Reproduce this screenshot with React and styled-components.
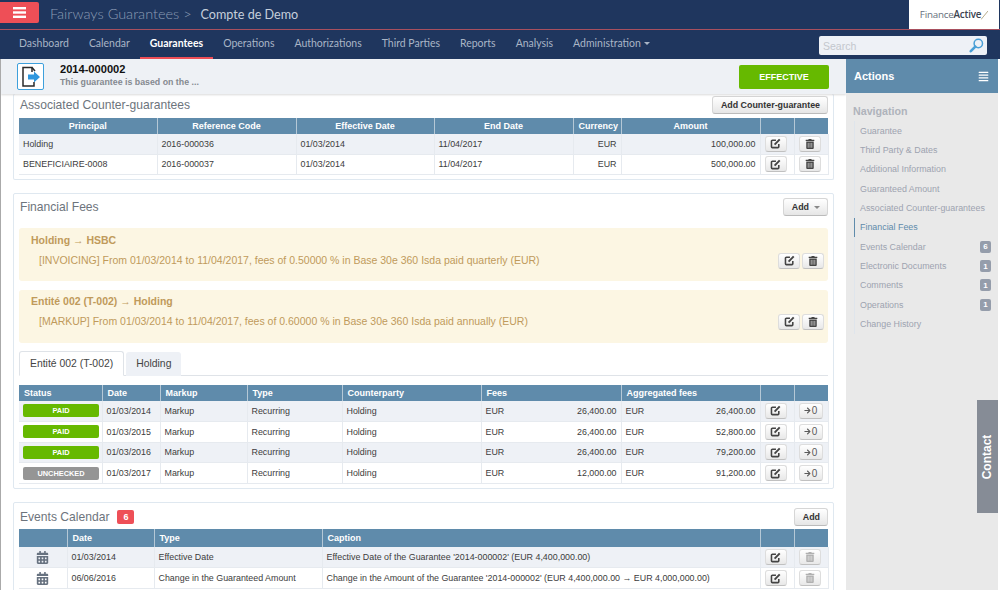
import React from 'react';
import styled, { createGlobalStyle } from 'styled-components';
import { FaTrashAlt, FaArrowRight, FaCalendarAlt, FaAlignJustify } from 'react-icons/fa';

const Global = createGlobalStyle`
  html, body { margin: 0; padding: 0; background: #fff; }
  body { font-family: "Liberation Sans", Arial, sans-serif; font-size: 9px; color: #333; }
  * { box-sizing: border-box; }
`;

const Page = styled.div`width: 1000px; height: 590px; overflow: hidden; position: relative; display: flex; flex-direction: column;`;
const TopBar = styled.div`height: 29px; flex: none; background: #1f365e; display: flex; align-items: flex-start;`;
const MenuButton = styled.div`width: 39px; height: 21px; margin-top: 2px; background: #ee4f57; border-radius: 0 2px 2px 0; display: flex; align-items: center; justify-content: center;`;
const Crumb = styled.div`margin: 4px 0 0 11px; font-family: Lato, sans-serif; font-size: 14.5px; line-height: 19px; color: #8c9db5; font-weight: 300; white-space: nowrap;`;
const Account = styled.span`color: #c6cfdb; font-weight: 400; font-size: 12.6px; margin-left: 5px;`;
const Logo = styled.div`margin-left: auto; margin-right: 1px; width: 90px; height: 29px; background: #fff; display: flex; align-items: center; justify-content: center; font-family: "Open Sans", sans-serif; font-size: 9.8px; letter-spacing: -0.2px; color: #666f7c;`;
const LogoBold = styled.b`color: #3a4350; font-weight: 600;`;
const NavBar = styled.div`height: 30px; flex: none; background: #1f365e; border-top: 1px solid #a8505f; display: flex; padding-left: 9px; align-items: stretch; position: relative;`;
const NavItem = styled.div`padding: 0 10px; font-family: Lato, sans-serif; font-size: 10.47px; line-height: 27px; white-space: nowrap; color: ${p => p.$active ? '#fff' : '#a9b5c6'}; font-weight: ${p => p.$active ? 700 : 400}; border-bottom: 2px solid ${p => p.$active ? '#ee4f57' : 'transparent'};`;
const Caret = styled.span`display: inline-block; margin-left: 3px; border: 3px solid transparent; border-top-color: #a9b5c6; border-bottom: 0; vertical-align: 2px;`;
const SearchBox = styled.div`margin: 6px 13px 0 auto; width: 168px; height: 19px; background: #eef1f6; border-radius: 2px; display: flex; align-items: center; justify-content: space-between; padding: 0 3px 0 4px; font-size: 10.5px; color: #c3c7cd;`;

const Main = styled.div`flex: 1; display: flex; min-height: 0; padding-right: 2px;`;
const Content = styled.div`width: 846px; flex: none; border-left: 1px solid #aaa; display: flex; flex-direction: column; overflow: hidden;`;
const Header = styled.div`height: 35px; flex: none; background: #eef1f5; display: flex; align-items: center; padding: 0 17px 0 16px; box-shadow: 0 1px 2px rgba(0,0,0,.15); position: relative; z-index: 1;`;
const DocIcon = styled.div`width: 27px; height: 27px; background: #fff; border: 1px solid #3da0dc; border-radius: 2px; display: flex; align-items: center; justify-content: center;`;
const HeaderText = styled.div`margin-left: 16px; padding-bottom: 2px; display: flex; flex-direction: column;`;
const DocNumber = styled.div`font-weight: 700; font-size: 11.1px; line-height: 13px; color: #111;`;
const DocSub = styled.div`font-weight: 700; font-size: 8.8px; line-height: 13px; color: #858a90;`;
const StatusButton = styled.div`margin-left: auto; width: 90px; height: 24px; background: #66b900; border-radius: 2px; color: #fff; font-weight: 700; font-size: 9px; display: flex; align-items: center; justify-content: center;`;

const Panels = styled.div`padding: 0 12px; display: flex; flex-direction: column; gap: 13px;`;
const Panel = styled.div`border: 1px solid #dfe8f0; border-top: ${p => p.$open ? 0 : '1px solid #dfe8f0'}; border-radius: 2px; padding: 0 5px ${p => p.$pb ?? 5}px;`;
const PanelHead = styled.div`height: ${p => p.$h}px; display: flex; align-items: center; justify-content: space-between; padding: ${p => p.$pt || 0}px 0 ${p => p.$pb || 0}px 1px;`;
const TitleGroup = styled.div`display: flex; align-items: center; gap: 8px;`;
const Title = styled.div`font-size: 12.1px; color: #6d747c;`;
const CountBadge = styled.span`background: #ee4f57; color: #fff; font-weight: 700; font-size: 9px; width: 17px; height: 14px; border-radius: 2px; display: flex; align-items: center; justify-content: center;`;
const Btn = styled.div`height: 18px; padding: 0 7px 0 7.5px; display: inline-flex; align-items: center; gap: 5px; font-size: 8.9px; font-weight: 700; color: #333; background: linear-gradient(#fff, #e6e6e6); border: 1px solid #d6d6d6; border-bottom-color: #bbb; border-radius: 3px; white-space: nowrap;`;
const BtnCaret = styled.span`border: 3px solid transparent; border-top-color: #888; border-bottom: 0;`;
const IconBtn = styled.div`width: ${p => p.$wide ? 24 : 22}px; height: 16px; display: inline-flex; align-items: center; justify-content: center; gap: 1px; font-size: 10px; vertical-align: middle; color: ${p => p.$muted ? '#b0b0b0' : p.$wide ? '#5a5a5a' : '#444'}; background: linear-gradient(#fff, #e8e8e8); border: 1px solid #ddd; border-bottom-color: #c0c0c0; border-radius: 3px;`;

const Table = styled.table`width: 100%; table-layout: fixed; border-collapse: collapse; font-size: 8.9px;`;
const Th = styled.th`background: #5f8bab; color: #fff; font-weight: 700; font-size: 9px; height: ${p => p.$h}px; padding: 0 5px; text-align: ${p => p.$left ? 'left' : 'center'}; border-right: 1px solid #b5c8d6; &:last-child { border-right: 0; }`;
const Tr = styled.tr`background: ${p => p.$odd ? '#eef1f6' : '#fff'};`;
const Td = styled.td`height: ${p => p.$h}px; padding: ${p => p.$pad ?? '0 4px'}; border: 1px solid #e6eaef; border-width: 0 1px 1px 0; color: #3c3c3c; white-space: nowrap; overflow: hidden; text-align: ${p => p.$align || 'left'};`;
const ActionTd = styled(Td)`padding: 0 ${p => p.$right ?? 3}px 0 0; text-align: center;`;
const Split = styled.div`display: flex; justify-content: space-between;`;
const Pill = styled.div`width: 76px; height: 13px; margin-left: 4px; border-radius: 2px; background: ${p => p.$grey ? '#959595' : '#66b900'}; color: #fff; font-weight: 700; font-size: 7.4px; display: flex; align-items: center; justify-content: center;`;
const CalIcon = styled(FaCalendarAlt)`color: #677280; font-size: 13px; display: block; margin: 0 auto;`;

const Alert = styled.div`height: 53px; background: #fcf6e3; border-radius: 3px; margin-top: ${p => p.$mt}px; padding: ${p => p.$pt}px 4px 0 12px; color: #c09a5b; font-size: 10.5px; display: flex; flex-direction: column;`;
const AlertTitle = styled.div`font-weight: 700; line-height: 12px;`;
const AlertRow = styled.div`display: flex; justify-content: space-between; padding-left: 8px; line-height: 12px; margin-top: 8px;`;
const AlertActions = styled.div`display: flex; gap: 2px; margin-top: -1px; align-self: flex-start;`;
const Tabs = styled.div`display: flex; gap: 2px; height: 25px; margin-top: 8px; border-bottom: 1px solid #dfe3e8; align-items: flex-end;`;
const Tab = styled.div`height: ${p => p.$active ? 25 : 24}px; padding: 0 10px; display: flex; align-items: center; font-size: 10.4px; color: #444; border-radius: 3px 3px 0 0; background: ${p => p.$active ? '#fff' : '#eef1f6'}; border: ${p => p.$active ? '1px solid #dfe3e8' : '0'}; border-bottom: ${p => p.$active ? '1px solid #fff' : '0'}; margin-bottom: -1px;`;
const TabBody = styled.div`padding-top: 9px;`;

const Side = styled.div`width: 152px; flex: none; background: #e9e9e9; display: flex; flex-direction: column;`;
const SideHead = styled.div`height: 34px; background: #5f8bab; color: #fff; display: flex; align-items: center; justify-content: space-between; padding: 0 9px 0 8px; font-weight: 700; font-size: 11px;`;
const SideTitle = styled.div`margin: 12px 0 3px 7px; font-weight: 700; font-size: 10.7px; color: #afb3bb; line-height: 13px;`;
const SideList = styled.div`margin-left: 8px; display: flex; flex-direction: column;`;
const SideItem = styled.div`height: 19.35px; display: flex; align-items: center; justify-content: space-between; padding: 0 7px 0 5px; font-size: 8.9px; color: ${p => p.$active ? '#5f8bab' : '#9da3b0'}; border-left: 1px solid ${p => p.$active ? '#5f8bab' : '#dfe5ec'};`;
const SideBadge = styled.span`width: 11px; height: 12px; background: #959dab; color: #fff; font-weight: 700; font-size: 8px; border-radius: 2px; display: flex; align-items: center; justify-content: center;`;
const ContactTab = styled.div`position: absolute; left: 977px; top: 400px; width: 21px; height: 113px; background: #868c96; color: #fff; font-weight: 700; font-size: 12px; display: flex; align-items: center; justify-content: center;`;
const ContactText = styled.span`transform: rotate(-90deg); white-space: nowrap;`;

const Col = styled.col`width: ${p => p.$w}px;`;
const Cols = ({ w }) => <colgroup>{w.map((x, i) => <Col key={i} $w={x} />)}</colgroup>;

const EditGlyph = () => (
  <svg width="11" height="11" viewBox="0 0 12 12" fill="none" stroke="currentColor">
    <path d="M6.5 2.5H2.6a1 1 0 0 0-1 1v6a1 1 0 0 0 1 1h6a1 1 0 0 0 1-1V6.5" strokeWidth="1.7" />
    <path d="M5 7.3 L10.6 1.5" strokeWidth="2.1" />
  </svg>
);
const Edit = () => <IconBtn><EditGlyph /></IconBtn>;
const Trash = ({ muted }) => <IconBtn $muted={muted}><FaTrashAlt size={10} /></IconBtn>;
const Move = () => <IconBtn $wide><FaArrowRight size={7} />0</IconBtn>;

const nav = ['Dashboard', 'Calendar', 'Guarantees', 'Operations', 'Authorizations', 'Third Parties', 'Reports', 'Analysis'];
const side = [['Guarantee'], ['Third Party & Dates'], ['Additional Information'], ['Guaranteed Amount'], ['Associated Counter-guarantees'], ['Financial Fees', null, true], ['Events Calendar', 6], ['Electronic Documents', 1], ['Comments', 1], ['Operations', 1], ['Change History']];
const fees = [['PAID', '01/03/2014', '26,400.00', '26,400.00'], ['PAID', '01/03/2015', '26,400.00', '52,800.00'], ['PAID', '01/03/2016', '26,400.00', '79,200.00'], ['UNCHECKED', '01/03/2017', '12,000.00', '91,200.00']];

export default function App() {
  return (
    <Page>
      <Global />
      <TopBar>
        <MenuButton>
          <svg width="13" height="11" viewBox="0 0 13 11" fill="#fff"><rect width="13" height="2.4" /><rect y="4.3" width="13" height="2.4" /><rect y="8.6" width="13" height="2.4" /></svg>
        </MenuButton>
        <Crumb>Fairways Guarantees &gt; <Account>Compte de Demo</Account></Crumb>
        <Logo>Finance<LogoBold>Active</LogoBold>
          <svg width="7" height="10" viewBox="0 0 7 10"><path d="M0 9.5 L7 1" stroke="#b8ad8c" strokeWidth="1" /></svg>
        </Logo>
      </TopBar>
      <NavBar>
        {nav.map(n => <NavItem key={n} $active={n === 'Guarantees'}>{n}</NavItem>)}
        <NavItem>Administration<Caret /></NavItem>
        <SearchBox>
          Search
          <svg width="15" height="15" viewBox="0 0 15 15" fill="none" stroke="#4a9fd6">
            <circle cx="9.3" cy="5.5" r="4.2" strokeWidth="1.5" />
            <path d="M6.3 8.6 L1.8 13.2" strokeWidth="2.6" strokeLinecap="round" />
          </svg>
        </SearchBox>
      </NavBar>
      <Main>
        <Content>
          <Header>
            <DocIcon>
              <svg width="25" height="25" viewBox="0 0 25 25">
                <path d="M14 8 V3.5 H5 V22 H16 V18" fill="none" stroke="#2a2a2a" strokeWidth="1.5" />
                <path d="M14 3.5 L17 7" fill="none" stroke="#2a2a2a" strokeWidth="1.5" />
                <path d="M10 10.5 H16 V7.5 L22 13 L16 18.5 V15.5 H10 Z" fill="#2f97de" />
              </svg>
            </DocIcon>
            <HeaderText>
              <DocNumber>2014-000002</DocNumber>
              <DocSub>This guarantee is based on the ...</DocSub>
            </HeaderText>
            <StatusButton>EFFECTIVE</StatusButton>
          </Header>
          <Panels>
            <Panel $open $pb={4}>
              <PanelHead $h={24} $pb={3}>
                <Title>Associated Counter-guarantees</Title>
                <Btn>Add Counter-guarantee</Btn>
              </PanelHead>
              <Table>
                <Cols w={[138, 139, 138, 139, 48, 139, 34, 34]} />
                <thead><tr>
                  {['Principal', 'Reference Code', 'Effective Date', 'End Date', 'Currency', 'Amount', '', ''].map((h, i) => <Th key={i} $h={16}>{h}</Th>)}
                </tr></thead>
                <tbody>
                  {[['Holding', '2016-000036', '100,000.00'], ['BENEFICIAIRE-0008', '2016-000037', '500,000.00']].map((r, i) => (
                    <Tr key={i} $odd={i === 0}>
                      <Td $h={20}>{r[0]}</Td><Td>{r[1]}</Td><Td>01/03/2014</Td><Td>11/04/2017</Td>
                      <Td $align="right">EUR</Td><Td $align="right">{r[2]}</Td>
                      <ActionTd><Edit /></ActionTd><ActionTd><Trash /></ActionTd>
                    </Tr>
                  ))}
                </tbody>
              </Table>
            </Panel>

            <Panel $pb={4}>
              <PanelHead $h={26} $pt={1}>
                <Title>Financial Fees</Title>
                <Btn>Add<BtnCaret /></Btn>
              </PanelHead>
              <Alert $mt={8} $pt={6}>
                <AlertTitle>Holding → HSBC</AlertTitle>
                <AlertRow>
                  <span>[INVOICING] From 01/03/2014 to 11/04/2017, fees of 0.50000 % in Base 30e 360 Isda paid quarterly (EUR)</span>
                  <AlertActions><Edit /><Trash /></AlertActions>
                </AlertRow>
              </Alert>
              <Alert $mt={9} $pt={5}>
                <AlertTitle>Entité 002 (T-002) → Holding</AlertTitle>
                <AlertRow>
                  <span>[MARKUP] From 01/03/2014 to 11/04/2017, fees of 0.60000 % in Base 30e 360 Isda paid annually (EUR)</span>
                  <AlertActions><Edit /><Trash /></AlertActions>
                </AlertRow>
              </Alert>
              <Tabs>
                <Tab $active>Entité 002 (T-002)</Tab>
                <Tab>Holding</Tab>
              </Tabs>
              <TabBody>
                <Table>
                  <Cols w={[83, 58, 87, 95, 139, 140, 139, 34, 34]} />
                  <thead><tr>
                    {['Status', 'Date', 'Markup', 'Type', 'Counterparty', 'Fees', 'Aggregated fees', '', ''].map((h, i) => <Th key={i} $h={16} $left>{h}</Th>)}
                  </tr></thead>
                  <tbody>
                    {fees.map((r, i) => (
                      <Tr key={i} $odd={i % 2 === 0}>
                        <Td $h={20.8} $pad="0"><Pill $grey={r[0] !== 'PAID'}>{r[0]}</Pill></Td>
                        <Td>{r[1]}</Td><Td>Markup</Td><Td>Recurring</Td><Td>Holding</Td>
                        <Td><Split><span>EUR</span><span>{r[2]}</span></Split></Td>
                        <Td><Split><span>EUR</span><span>{r[3]}</span></Split></Td>
                        <ActionTd><Edit /></ActionTd><ActionTd $right={1}><Move /></ActionTd>
                      </Tr>
                    ))}
                  </tbody>
                </Table>
              </TabBody>
            </Panel>

            <Panel>
              <PanelHead $h={26} $pt={1}>
                <TitleGroup><Title>Events Calendar</Title><CountBadge>6</CountBadge></TitleGroup>
                <Btn>Add</Btn>
              </PanelHead>
              <Table>
                <Cols w={[48, 87, 168, 438, 34, 34]} />
                <thead><tr>
                  {['', 'Date', 'Type', 'Caption', '', ''].map((h, i) => <Th key={i} $h={18} $left>{h}</Th>)}
                </tr></thead>
                <tbody>
                  <Tr $odd>
                    <Td $h={20.6} $pad="0"><CalIcon /></Td><Td>01/03/2014</Td><Td>Effective Date</Td>
                    <Td>Effective Date of the Guarantee '2014-000002' (EUR 4,400,000.00)</Td>
                    <ActionTd><Edit /></ActionTd><ActionTd><Trash muted /></ActionTd>
                  </Tr>
                  <Tr>
                    <Td $h={20.6} $pad="0"><CalIcon /></Td><Td>06/06/2016</Td><Td>Change in the Guaranteed Amount</Td>
                    <Td>Change in the Amount of the Guarantee '2014-000002' (EUR 4,400,000.00 → EUR 4,000,000.00)</Td>
                    <ActionTd><Edit /></ActionTd><ActionTd><Trash muted /></ActionTd>
                  </Tr>
                </tbody>
              </Table>
            </Panel>
          </Panels>
        </Content>
        <Side>
          <SideHead>Actions <FaAlignJustify size={11} /></SideHead>
          <SideTitle>Navigation</SideTitle>
          <SideList>
            {side.map(([t, b, a]) => (
              <SideItem key={t} $active={a}>{t}{b && <SideBadge>{b}</SideBadge>}</SideItem>
            ))}
          </SideList>
        </Side>
      </Main>
      <ContactTab><ContactText>Contact</ContactText></ContactTab>
    </Page>
  );
}
